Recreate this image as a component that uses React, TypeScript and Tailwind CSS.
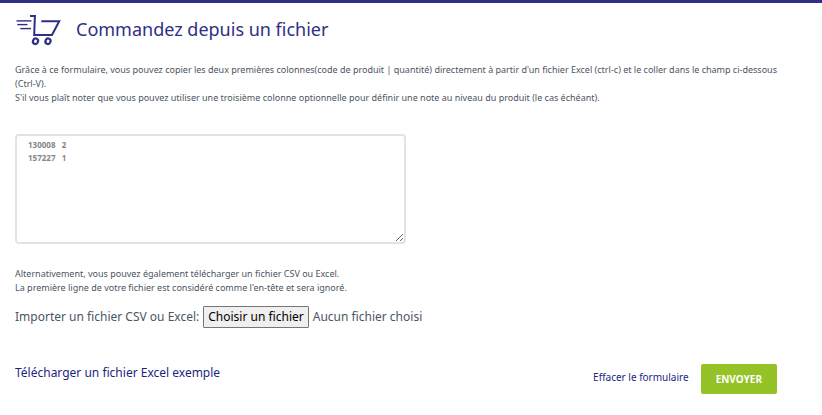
import React, { useRef, useState } from 'react';

const DEFAULT_LINES = '130008   2\n157227   1';

const CartIcon = () => (
  <svg
    width="46"
    height="32"
    viewBox="-1 -1 46 32"
    fill="none"
    stroke="#2e3085"
    className="overflow-visible"
    aria-hidden="true"
  >
    <g strokeWidth="1.4">
      <path d="M0.5 6.9H15.5" />
      <path d="M1.3 10.6H11.5" />
      <path d="M4.3 14.6H15" />
    </g>
    <path d="M14 1.9H18.9L18.2 20.9H36L43.2 7.3H25.3" strokeWidth="2" />
    <ellipse cx="19.5" cy="27.3" rx="2.5" ry="2.8" strokeWidth="2.2" transform="rotate(25 19.5 27.3)" />
    <ellipse cx="32" cy="27.3" rx="2.5" ry="2.8" strokeWidth="2.2" transform="rotate(25 32 27.3)" />
  </svg>
);

const App = () => {
  const [lines, setLines] = useState(DEFAULT_LINES);
  const [fileName, setFileName] = useState('');
  const fileRef = useRef<HTMLInputElement>(null);

  const clearForm = () => {
    setLines('');
    setFileName('');
    if (fileRef.current) fileRef.current.value = '';
  };

  return (
    <main className="border-t-3 border-[#2e3085] bg-white px-[15px] font-['Noto_Sans',sans-serif] text-[#4b5563]">
      <header className="flex items-center gap-[15px] pt-2.5">
        <CartIcon />
        <h1 className="text-lg text-[#2e3085]">Commandez depuis un fichier</h1>
      </header>

      <form onSubmit={(e) => e.preventDefault()}>
        <div className="mt-[18px] max-w-[775px] text-[9px] leading-[14px]">
          <p>
            Grâce à ce formulaire, vous pouvez copier les deux premières colonnes(code de produit | quantité)
            directement à partir d'un fichier Excel (ctrl-c) et le coller dans le champ ci-dessous (Ctrl-V).
          </p>
          <p>
            S'il vous plaît noter que vous pouvez utiliser une troisième colonne optionnelle pour définir une note au
            niveau du produit (le cas échéant).
          </p>
        </div>

        <textarea
          aria-label="Codes de produit et quantités"
          className="mt-[29px] block h-[110px] w-full max-w-[391px] rounded-sm border-2 border-[#e3e3e3] px-[11px] py-0.5 text-[8px] leading-[13px] font-bold text-[#858585]"
          value={lines}
          onChange={(e) => setLines(e.target.value)}
        />

        <div className="mt-[23px] text-[9px] leading-[14px]">
          <p>Alternativement, vous pouvez également télécharger un fichier CSV ou Excel.</p>
          <p>La première ligne de votre fichier est considéré comme l'en-tête et sera ignoré.</p>
        </div>

        <div className="mt-[11px] flex items-center gap-1 text-xs">
          <label htmlFor="import-file">Importer un fichier CSV ou Excel:</label>
          <input
            id="import-file"
            ref={fileRef}
            type="file"
            accept=".csv,.xls,.xlsx"
            className="sr-only"
            onChange={(e) => setFileName(e.target.files?.[0]?.name ?? '')}
          />
          <button
            type="button"
            className="h-[22px] rounded-[1px] border border-[#767676] bg-[#efefef] px-1 text-black"
            onClick={() => fileRef.current?.click()}
          >
            Choisir un fichier
          </button>
          <span>{fileName || 'Aucun fichier choisi'}</span>
        </div>

        <div className="mt-9 flex items-start justify-between pr-[30px]">
          <a href="#exemple" className="text-xs leading-[18px] text-[#221f7f]">
            Télécharger un fichier Excel exemple
          </a>
          <div className="flex items-center gap-3">
            <button type="button" className="pb-1 text-[10px] text-[#221f7f]" onClick={clearForm}>
              Effacer le formulaire
            </button>
            <button
              type="submit"
              className="h-[30px] rounded-xs bg-[#95c226] px-[15px] text-[10px] font-bold text-white"
            >
              ENVOYER
            </button>
          </div>
        </div>
      </form>
    </main>
  );
};

export default App;
